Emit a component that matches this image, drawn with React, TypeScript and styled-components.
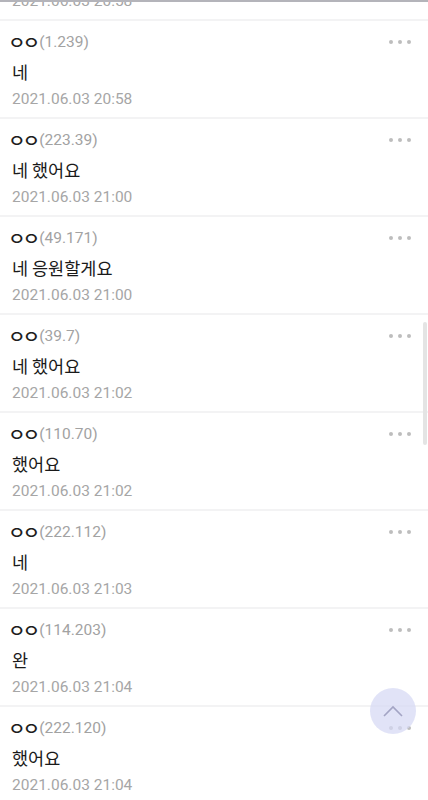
import React from "react";
import styled, { createGlobalStyle } from "styled-components";

const Global = createGlobalStyle`
  html, body { margin: 0; padding: 0; background: #fff; }
  body { font-family: Roboto, "Noto Sans CJK KR", sans-serif; -webkit-font-smoothing: antialiased; }
`;

const Viewport = styled.div`
  position: relative;
  width: 428px;
  height: 800px;
  overflow: hidden;
  background: #fff;
`;

const List = styled.ul<{ $offset: number }>`
  list-style: none;
  margin: ${(p) => -p.$offset}px 0 0;
  padding: 0;
`;

const Item = styled.li`
  position: relative;
  display: flex;
  flex-direction: column;
  border-top: 2px solid #f3f3f4;
  padding: 10px 12px 7px;
`;

const NameRow = styled.div`
  display: flex;
  align-items: center;
  height: 22px;
  font-size: 15.5px;
  color: #222;
`;

const Nick = styled.span`
  display: inline-block;
  flex: none;
  width: 31.5px;
  margin-left: -4.3px;
  font-family: "Noto Sans CJK KR", sans-serif;
  font-size: 16px;
  font-weight: 500;
  color: #1e1e1e;
  letter-spacing: -2.6px;
  white-space: nowrap;
  transform: scale(1.2, 1.05);
  transform-origin: left center;
`;

const Ip = styled.span`
  color: #a2a2a2;
`;

const Content = styled.div`
  margin-top: 6px;
  height: 26px;
  line-height: 26px;
  font-family: "Noto Sans CJK KR", sans-serif;
  font-size: 17.5px;
  color: #1a1a1a;
`;

const DateText = styled.div`
  margin-top: 3px;
  height: 22px;
  line-height: 22px;
  font-size: 15.5px;
  color: #a6a6a6;
`;

const MoreBtn = styled.div`
  position: absolute;
  top: 19px;
  right: 17px;
  display: flex;
  gap: 5px;
`;

const Dot = styled.span`
  width: 4px;
  height: 4px;
  border-radius: 50%;
  background: #bdbdbd;
`;

const TopLine = styled.div`
  position: absolute;
  top: 0;
  left: 0;
  right: 0;
  height: 1.5px;
  background: #b4b4ba;
`;

const ScrollThumb = styled.div`
  position: absolute;
  right: 1px;
  top: 322px;
  width: 4px;
  height: 123px;
  background: #e4e4e4;
  border-radius: 2px;
`;

const TopButton = styled.button`
  position: absolute;
  left: 370px;
  top: 688px;
  width: 46px;
  height: 46px;
  border-radius: 50%;
  border: none;
  padding: 0;
  background: rgba(214, 216, 244, 0.72);
  display: flex;
  align-items: center;
  justify-content: center;
`;

type Comment = { ip: string; text: string; date: string };

const comments: Comment[] = [
  { ip: "0.0", text: "네", date: "2021.06.03 20:58" },
  { ip: "1.239", text: "네", date: "2021.06.03 20:58" },
  { ip: "223.39", text: "네 했어요", date: "2021.06.03 21:00" },
  { ip: "49.171", text: "네 응원할게요", date: "2021.06.03 21:00" },
  { ip: "39.7", text: "네 했어요", date: "2021.06.03 21:02" },
  { ip: "110.70", text: "했어요", date: "2021.06.03 21:02" },
  { ip: "222.112", text: "네", date: "2021.06.03 21:03" },
  { ip: "114.203", text: "완", date: "2021.06.03 21:04" },
  { ip: "222.120", text: "했어요", date: "2021.06.03 21:04" },
];

export default function App() {
  return (
    <>
      <Global />
      <Viewport>
        <List $offset={79}>
          {comments.map((c, i) => (
            <Item key={i}>
              <NameRow>
                <Nick>ㅇㅇ</Nick>
                <Ip>({c.ip})</Ip>
              </NameRow>
              <Content>{c.text}</Content>
              <DateText>{c.date}</DateText>
              <MoreBtn>
                <Dot />
                <Dot />
                <Dot />
              </MoreBtn>
            </Item>
          ))}
        </List>
        <TopLine />
        <ScrollThumb />
        <TopButton aria-label="맨 위로">
          <svg width="22" height="14" viewBox="0 0 22 14">
            <path d="M2 12 L11 3 L20 12" fill="none" stroke="#a3a4c4" strokeWidth="1.6" />
          </svg>
        </TopButton>
      </Viewport>
    </>
  );
}
